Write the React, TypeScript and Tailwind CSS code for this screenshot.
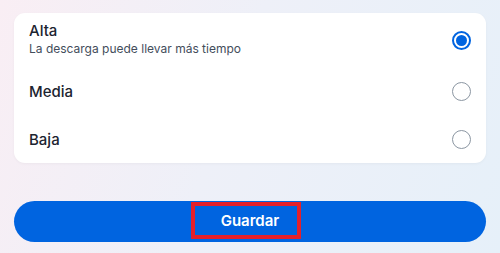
import React from "react";

function Radio({ checked }: { checked?: boolean }) {
  return checked ? (
    <div className="w-[19px] h-[19px] rounded-full border-2 border-[#0064e0] flex items-center justify-center">
      <div className="w-[11px] h-[11px] rounded-full bg-[#0064e0]" />
    </div>
  ) : (
    <div className="w-[19px] h-[19px] rounded-full border-[1.5px] border-[#8b96a2]" />
  );
}

export default function App() {
  return (
    <div
      className="w-[500px] h-[253px] overflow-hidden bg-[linear-gradient(110deg,#f9eef4_0%,#eef0f8_45%,#e6f0f9_100%)] px-[14px] pt-[13px]"
      style={{ fontFamily: "Inter, 'Noto Sans', sans-serif" }}
    >
      <div className="bg-white rounded-[11px] shadow-[0_1px_3px_rgba(0,0,0,0.04)] h-[150px] flex flex-col pl-[15px] pr-[15px]">
        <div className="h-[54px] flex items-center justify-between">
          <div className="flex flex-col pb-[2px]">
            <span className="text-[15px] leading-[19px] font-medium text-[#1c2430]">Alta</span>
            <span className="text-[12px] leading-[17px] text-[#434d5b]">La descarga puede llevar más tiempo</span>
          </div>
          <Radio checked />
        </div>
        <div className="h-[48px] flex items-center justify-between">
          <span className="text-[15px] leading-[20px] font-medium text-[#1c2430] pt-[2px]">Media</span>
          <Radio />
        </div>
        <div className="h-[48px] flex items-center justify-between">
          <span className="text-[15px] leading-[20px] font-medium text-[#1c2430] pt-[2px]">Baja</span>
          <Radio />
        </div>
      </div>
      <div className="mt-[38px] relative h-[41px] rounded-full bg-[#0064e0] flex items-center justify-center">
        <span className="text-white text-[15px] font-semibold">Guardar</span>
        <div className="absolute left-[177px] top-[1px] w-[110px] h-[37px] border-[4px] border-[#e4202b]" />
      </div>
    </div>
  );
}
